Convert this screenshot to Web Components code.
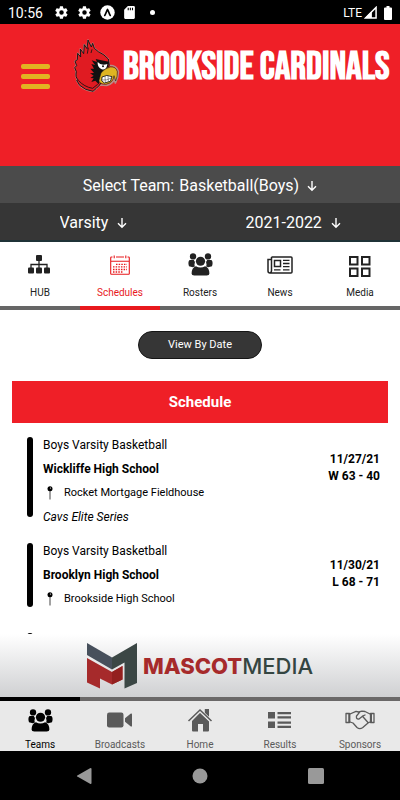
<!DOCTYPE html>
<html lang="en">
<head>
<meta charset="utf-8">
<meta name="viewport" content="width=device-width, initial-scale=1">
<title>Brookside Cardinals</title>
<style>
  html, body { height: 100%; }
  body { margin: 0; background: #fff; color: #000; font-family: Roboto, "Liberation Sans", sans-serif; }
</style>
</head>
<body>
<team-app></team-app>

<script>
const ICONS = {
  gear: ['0 0 24 24', '<path fill="currentColor" fill-rule="evenodd" d="M19.4 13a7.800 7.800 0 0 0 0-2l2.100-1.600a.5.5 0 0 0 .1-.6l-2-3.500a.5.5 0 0 0-.6-.2l-2.500 1a7.300 7.300 0 0 0-1.700-1l-.4-2.600a.5.5 0 0 0-.5-.4h-4a.5.5 0 0 0-.5.4L9 5.100a7.300 7.300 0 0 0-1.700 1l-2.500-1a.5.5 0 0 0-.6.200l-2 3.500a.5.5 0 0 0 .1.600L4.500 11a7.800 7.800 0 0 0 0 2l-2.200 1.600a.5.5 0 0 0-.1.600l2 3.500a.5.5 0 0 0 .6.200l2.500-1a7.300 7.300 0 0 0 1.700 1l.4 2.600a.5.5 0 0 0 .5.400h4a.5.5 0 0 0 .5-.4l.4-2.600a7.300 7.300 0 0 0 1.700-1l2.500 1a.5.5 0 0 0 .6-.2l2-3.500a.5.5 0 0 0-.1-.6zM12 15.600a3.600 3.600 0 1 1 0-7.200 3.600 3.600 0 0 1 0 7.200z"/>'],
  expo: ['0 0 16 16', '<circle cx="8" cy="8" r="7.700" fill="currentColor"/><path d="M5 11.200C6.300 9.500 7 6.300 8 4.600 9 6.300 9.700 9.500 11 11.200" fill="none" stroke="#000" stroke-width="1.700" stroke-linecap="round" stroke-linejoin="round"/>'],
  sd: ['0 0 12 14', '<path fill="currentColor" d="M4.500 1H10a1 1 0 0 1 1 1v10a1 1 0 0 1-1 1H2a1 1 0 0 1-1-1V4.500z"/><path d="M4.800 2.500v2.500M6.800 2.500v2.500M8.800 2.500v2.500" stroke="#000" stroke-width="1"/>'],
  signal: ['0 0 14 14', '<path d="M1.500 13H13V1.500z" fill="none" stroke="currentColor" stroke-width="1.600"/><path d="M1 13H8.500V5.500z" fill="currentColor"/>'],
  battery: ['0 0 8 14', '<path fill="currentColor" d="M2.500 0h3v1.500H7a1 1 0 0 1 1 1V13a1 1 0 0 1-1 1H1a1 1 0 0 1-1-1V2.500a1 1 0 0 1 1-1h1.500z"/>'],
  down: ['0 0 10 12', '<path d="M5 1v9M1 6.300 5 10.300 9 6.300" fill="none" stroke="currentColor" stroke-width="1.400"/>'],
  hub: ['0 0 24 20', '<g fill="currentColor"><rect x="8" y="0" width="6" height="6" rx="1"/><rect x="0" y="12.500" width="6" height="6" rx="1"/><rect x="8" y="12.500" width="6" height="6" rx="1"/><rect x="16" y="12.500" width="6" height="6" rx="1"/></g><path d="M11 5v8M3 13V9.500H19V13" fill="none" stroke="currentColor" stroke-width="1.300"/>'],
  calendar: ['0 0 20 20', '<path d="M2.500 2H1.500a.8.8 0 0 0-.8.8V18.500a.8.8 0 0 0 .8.800h17a.8.8 0 0 0 .8-.8V2.800a.8.8 0 0 0-.8-.8h-1M6 2h8M.7 6.300h18.600M4.200.4v2.800M15.800.4v2.800" fill="none" stroke="currentColor" stroke-width="1.100"/><path d="M6 9.300h11M3 11.900h14M3 14.500h14M3 17h10" stroke="currentColor" stroke-width="1.300" stroke-dasharray="1.500 1.150"/>'],
  group: ['0 0 26 24', '<g fill="currentColor"><circle cx="5.200" cy="3.600" r="3.300"/><circle cx="20.800" cy="3.600" r="3.300"/><path d="M1.600 7.300h4.400l1.200 2-.6 3.500.9 1-2.500 1L1 13.800Q-.5 9 1.600 7.300zM24.400 7.300h-4.400l-1.200 2 .6 3.500-.9 1 2.500 1 4-1q1.500-4.800-.6-6.500z"/><circle cx="13" cy="8.600" r="4.800"/><path d="M8.200 13.700q4.800 3 9.600 0 4.500 1.500 4.500 7.800 0 2-2.800 2H6.500q-2.800 0-2.800-2 0-6.300 4.500-7.800z"/></g>'],
  news: ['0 0 26 18', '<g fill="none" stroke="currentColor" stroke-width="1.500"><path d="M4.500 1H24a1 1 0 0 1 1 1V16a1 1 0 0 1-1 1H3a2 2 0 0 1-2-2V3.500h3.500V15a1.600 1.600 0 0 1-1.600 1.600M4.500 4V1"/><rect x="7.500" y="4.500" width="6" height="6"/><path d="M16 4.300h6.500M16 7.500h6.500M16 10.700h6.500M7 13.800h6.500M16 13.800h6.500" stroke-width="1.300"/></g>'],
  grid: ['0 0 22 24', '<g fill="none" stroke="currentColor" stroke-width="2"><rect x="1" y="4" width="7.500" height="7.500"/><rect x="13" y="4" width="7.500" height="7.500"/><rect x="1" y="15.500" width="7.500" height="7.500"/><rect x="13" y="15.500" width="7.500" height="7.500"/></g>'],
  pin: ['0 0 6 14', '<path d="M3 4v9.500" stroke="#444" stroke-width="1"/><circle cx="3" cy="2.700" r="2.500" fill="#000"/><circle cx="3.500" cy="2" r=".6" fill="#fff"/>'],
  camera: ['0 0 26 16', '<g fill="currentColor"><rect x="0" y=".5" width="16.500" height="15" rx="2.200"/><path d="M18 6.300 23.500 1.800q1.500-.9 1.500.5v11.400q0 1.400-1.500.5L18 9.700z"/></g>'],
  house: ['0 0 28 26', '<g fill="currentColor"><path d="M14 5.500 23 14v9.500q0 1-1 1h-5V17h-5v7.500H7q-1 0-1-1V14zM18.800 2h4.200v8.200l-4.200-4z"/></g><path d="M2 15 14 3.500 26 15" fill="none" stroke="#e9e9e9" stroke-width="3.200"/><path d="M2.500 14 14 3 25.500 14" fill="none" stroke="currentColor" stroke-width="1.500"/>'],
  list: ['0 0 24 18', '<path fill="currentColor" d="M0 1h7v6.500H0zM0 10.500h7V17H0zM9.500 1H23v2.300H9.500zM9.500 5.200H23v2.300H9.500zM9.500 10.500H23v2.300H9.500zM9.500 14.700H23V17H9.500z"/>'],
  shake: ['0 0 30 20', '<g fill="none" stroke="currentColor" stroke-width="1.300" stroke-linejoin="round" stroke-linecap="round"><path d="M1 3.500H4.500V12.500H1zM29 3.500H25.500V12.500H29z"/><path d="M5 4 11 1.300 13.500 2 17 1.200 20 1.500 25 4M5 12 8 13 12 17.500Q14.500 19.500 17.500 17.800L23 13 25 12M14.500 2.300 11.500 6Q11 9.500 14 9L17.500 6.200 23 12.500M17.500 6.200 20 5"/></g><path fill="currentColor" d="M3.300 3.500h2v9h-2zM25 3.500h2v9h-2z"/>'],
  back: ['0 0 16 18', '<path fill="currentColor" d="M14 1.300q1.500-.8 1.500.8v13.800q0 1.600-1.500.8L1.300 9.600q-1-.6 0-1.200z"/>'],
  circle: ['0 0 16 16', '<circle cx="8" cy="8" r="7.500" fill="currentColor"/>'],
  square: ['0 0 16 16', '<rect width="16" height="16" rx="1.500" fill="currentColor"/>'],
  cardinal: ['24 21 144 162', `
    <path d="M34 122 29 110 35 104 30 91 37 86 38 67 47 78 46 54 56 68 58 41 66 53 69 27 79 48 83 37 88 52 100 62Q118 70 130 84L133 103Q154 102 160 121 161 137 151 156L148 139Q147 158 125 163L104 162 94 172 84 181Q60 178 44 163L35 148 39 146Q30 138 34 122z" fill="#e01b22" stroke="#b98a86" stroke-width="5" stroke-linejoin="round"/>
    <path d="M34 122 29 110 35 104 30 91 37 86 38 67 47 78 46 54 56 68 58 41 66 53 69 27 79 48 83 37 88 52 100 62Q118 70 130 84L133 103 104 162 94 172 84 181Q60 178 44 163L35 148 39 146Q30 138 34 122z" fill="#e01b22" stroke="#111" stroke-width="2.800" stroke-linejoin="round"/>
    <path d="M70 50 67 68M81 55 78 66M40 148Q58 168 83 172L98 160" fill="none" stroke="#111" stroke-width="2.500"/>
    <path d="M80 88 96 93 92 84 109 88 132 92 130 106 121 121 110 128 106 143 101 160 91 149 79 153 86 142 76 141 86 134 75 127 87 126 76 113 87 113 79 99 90 102z" fill="#111"/>
    <path d="M98 93Q108 105 127 99 125 119 110 115 96 108 98 93z" fill="#fff"/>
    <circle cx="114" cy="106" r="3" fill="#111"/>
    <path d="M108 126Q119 112 136 108 153 106 157 122 158 136 152 150L147 134Q145 156 121 160 101 158 102 148z" fill="#dfb522" stroke="#111" stroke-width="1.500"/>
    <path d="M111 138Q125 129 141 137L136 151 118 156 110 149z" fill="#fff" stroke="#111" stroke-width="2.500"/>
    <path d="M111 147Q124 149 139 141M120 135l1 20M129 134l1 18" fill="none" stroke="#333" stroke-width="1.500"/>`],
  mascot: ['0 0 50 46', '<path d="M0 0 25 14.500V26.500L0 12z" fill="#47505c"/><path d="M25 14.500 50 0V40L37.500 45.500V19.500L25 26.500z" fill="#3b4745"/><path d="M0 15 25 29 35.500 23V36.500L25 41.500 13 35.500V45.500L0 39.500z" fill="#a62a2b"/><path d="M25 29 35.500 23V36.500L25 41.500z" fill="#93201f"/>']
};

/* Base class: gives each element an open shadow root with its own markup and styles. */
class ShadowElement extends HTMLElement {
  connectedCallback() {
    if (this.shadowRoot) return;
    const t = document.createElement('template');
    t.innerHTML = `<style>*{box-sizing:border-box}${this.constructor.css}</style>${this.render()}`;
    this.attachShadow({ mode: 'open' }).append(t.content.cloneNode(true));
  }
}

class AppIcon extends ShadowElement {
  static css = ':host{display:inline-flex;flex:none} svg{display:block}';
  render() {
    const [box, body] = ICONS[this.getAttribute('name')];
    return `<svg viewBox="${box}" width="${this.getAttribute('w')}" height="${this.getAttribute('h')}" aria-hidden="true">${body}</svg>`;
  }
}

class StatusBar extends ShadowElement {
  static css = `
    :host{display:flex;align-items:center;justify-content:space-between;height:24px;box-sizing:border-box;flex:none;padding:1px 8px 0;background:#000;color:#fff}
    div{display:flex;align-items:center;gap:8px}
    time{font-size:14px;margin-right:3px}
    .right{font-size:12px;gap:2px}
    app-icon[name=battery]{margin-left:5px}
    i{width:5px;height:5px;border-radius:50%;background:#fff;margin-left:6px}`;
  render() {
    return `<div><time>10:56</time><app-icon name="gear" w="15" h="15"></app-icon><app-icon name="gear" w="15" h="15"></app-icon>
      <app-icon name="expo" w="15" h="15"></app-icon><app-icon name="sd" w="13" h="15"></app-icon><i></i></div>
      <div class="right"><span>LTE</span><app-icon name="signal" w="13" h="13"></app-icon><app-icon name="battery" w="8" h="14"></app-icon></div>`;
  }
}

class TeamHeader extends ShadowElement {
  static css = `
    :host{display:flex;align-items:flex-start;flex:none;height:142px;box-sizing:border-box;padding:14px 0 0 21px;background:#ef1f27;color:#fff}
    button{display:flex;flex-direction:column;gap:5px;width:29px;margin:26px 23px 0 0;padding:0;border:0;background:none}
    button span{display:block;width:100%;height:5px;border-radius:2px;background:#e2b322}
    h1{margin:0 0 0 2px;font:700 39px/60px "Bebas Neue","Roboto Condensed","Liberation Sans Narrow",Roboto,sans-serif;white-space:nowrap}`;
  render() {
    return `<button type="button" aria-label="Menu"><span></span><span></span><span></span></button>
      <app-icon name="cardinal" w="48" h="54"></app-icon><h1>BROOKSIDE CARDINALS</h1>`;
  }
}

class FilterSelect extends ShadowElement {
  static css = `
    :host{display:flex;align-items:center}
    label{margin-right:5px}
    select{appearance:none;border:0;margin:0 8px 0 0;padding:0;background:none;color:inherit;font:inherit}`;
  render() {
    const label = this.getAttribute('label'), hidden = this.hasAttribute('bare');
    return `${hidden ? '' : `<label for="s">${label}</label>`}
      <select id="s" ${hidden ? `aria-label="${label}"` : ''}><option>${this.getAttribute('value')}</option></select>
      <app-icon name="down" w="10" h="12"></app-icon>`;
  }
}

class TeamFilters extends ShadowElement {
  static css = `
    :host{display:block;flex:none;color:#fff;font-size:16px;border-bottom:2px solid #1f3237}
    div{display:flex;justify-content:space-around;height:37px;padding-top:2px;background:#363636}
    .team{background:#4b4b4b}`;
  render() {
    return `<div class="team"><filter-select label="Select Team:" value="Basketball(Boys)"></filter-select></div>
      <div><filter-select bare label="Level" value="Varsity"></filter-select><filter-select bare label="Season" value="2021-2022"></filter-select></div>`;
  }
}

class TabLink extends ShadowElement {
  static css = `
    :host{display:flex;flex:1 1 0;min-width:0}
    a{display:flex;flex:1;flex-direction:column;align-items:center;color:inherit;text-decoration:none}
    .icon{display:flex;align-items:center;height:var(--icon-height)}`;
  render() {
    return `<a href="#"><span class="icon"><slot name="icon"></slot></span><slot></slot></a>`;
  }
}

class TopTabs extends ShadowElement {
  static css = `
    :host{display:flex;flex:none;height:68px;font-size:10px;line-height:12px;color:#222;--icon-height:45px}
    ::slotted(tab-link){border-bottom:4px solid #666}
    ::slotted(tab-link[current]){color:#e8191d;border-bottom-color:#e8191d}`;
  render() { return '<slot></slot>'; }
}

class BottomTabs extends ShadowElement {
  static css = `
    :host{display:flex;flex:none;height:54px;font-size:10px;line-height:12px;color:#5a5a5a;background:#e9e9e9;--icon-height:38px}
    ::slotted(tab-link){border-top:4px solid #6a6868}
    ::slotted(tab-link[current]){color:#000;border-top-color:#000}`;
  render() { return '<slot></slot>'; }
}

class GameCard extends ShadowElement {
  static css = `
    :host{display:flex;margin:0 20px 26px 27px;min-height:64px}
    .rule{flex:none;width:6px;margin-right:10px;border-radius:3px;background:#000}
    .info{flex:1;min-width:0;font-size:12px;line-height:16px;display:flex;flex-direction:column;gap:8px}
    .info ::slotted(*){display:block}
    .place{display:flex;align-items:center;font-size:11px;margin-left:4px;gap:11px}
    .info ::slotted([slot=name]){font-weight:700}
    .info ::slotted([slot=note]){font-style:italic;margin-bottom:-8px}
    .result{flex:none;align-self:flex-start;margin-top:14px;text-align:right;font-size:12px;line-height:17px;font-weight:700}
    .result ::slotted(*){display:block}`;
  render() {
    if (this.hasAttribute('loading')) return '<div class="rule"></div>';
    return `<div class="rule"></div>
      <div class="info"><slot></slot><slot name="name"></slot>
        <div class="place"><app-icon name="pin" w="6" h="14"></app-icon><slot name="place"></slot></div><slot name="note"></slot></div>
      <div class="result"><slot name="date"></slot><slot name="score"></slot></div>`;
  }
}

class ScheduleView extends ShadowElement {
  static css = `
    :host{display:block;flex:1 1 0;min-height:0;overflow:hidden;padding-top:21px}
    button{display:block;width:124px;height:28px;margin:0 auto 22px;border:1px solid #151515;border-radius:14px;background:#363636;color:#fff;font:11px/26px Roboto,sans-serif;padding:0}
    h2{margin:0 12px 14px;background:#ef1f27;color:#fff;text-align:center;font-size:15px;line-height:42px;font-weight:700}`;
  render() { return '<button type="button">View By Date</button><h2>Schedule</h2><slot></slot>'; }
}

class SponsorBanner extends ShadowElement {
  static css = `
    :host{display:flex;align-items:center;justify-content:center;gap:6px;flex:none;height:63px;background:linear-gradient(#fff,#cfd0d2);font:500 22px Inter,sans-serif;color:#344541}
    b{font-weight:800;color:#a62a2b}`;
  render() { return '<app-icon name="mascot" w="50" h="46"></app-icon><span><b>MASCOT</b>MEDIA</span>'; }
}

class SystemNav extends ShadowElement {
  static css = `
    :host{display:flex;align-items:center;justify-content:center;gap:100px;flex:none;height:49px;background:#000;color:#999}
    button{display:flex;padding:0;border:0;background:none;color:inherit}`;
  render() {
    return [['back', 'Back', 18], ['circle', 'Home', 16], ['square', 'Recent apps', 16]]
      .map(([n, l, h]) => `<button type="button" aria-label="${l}"><app-icon name="${n}" w="16" h="${h}"></app-icon></button>`).join('');
  }
}

const tab = (label, icon, w, h, current) =>
  `<tab-link ${current ? 'current' : ''}><app-icon slot="icon" name="${icon}" w="${w}" h="${h}"></app-icon>${label}</tab-link>`;

class TeamApp extends ShadowElement {
  static css = ':host{display:flex;flex-direction:column;height:100vh;overflow:hidden}';
  render() {
    return `<status-bar></status-bar><team-header></team-header><team-filters></team-filters>
      <top-tabs>${tab('HUB', 'hub', 24, 20)}${tab('Schedules', 'calendar', 20, 20, true)}${tab('Rosters', 'group', 25, 23)}${tab('News', 'news', 26, 18)}${tab('Media', 'grid', 22, 24)}</top-tabs>
      <schedule-view>
        <game-card>Boys Varsity Basketball<span slot="name">Wickliffe High School</span><span slot="place">Rocket Mortgage Fieldhouse</span>
          <span slot="note">Cavs Elite Series</span><span slot="date">11/27/21</span><span slot="score">W 63 - 40</span></game-card>
        <game-card>Boys Varsity Basketball<span slot="name">Brooklyn High School</span><span slot="place">Brookside High School</span>
          <span slot="date">11/30/21</span><span slot="score">L 68 - 71</span></game-card>
        <game-card loading></game-card>
      </schedule-view>
      <sponsor-banner></sponsor-banner>
      <bottom-tabs>${tab('Teams', 'group', 25, 23, true)}${tab('Broadcasts', 'camera', 26, 16)}${tab('Home', 'house', 28, 26)}${tab('Results', 'list', 24, 18)}${tab('Sponsors', 'shake', 30, 20)}</bottom-tabs>
      <system-nav></system-nav>`;
  }
}

Object.entries({
  'app-icon': AppIcon, 'status-bar': StatusBar, 'team-header': TeamHeader, 'filter-select': FilterSelect,
  'team-filters': TeamFilters, 'tab-link': TabLink, 'top-tabs': TopTabs, 'bottom-tabs': BottomTabs,
  'game-card': GameCard, 'schedule-view': ScheduleView, 'sponsor-banner': SponsorBanner,
  'system-nav': SystemNav, 'team-app': TeamApp
}).forEach(([name, cls]) => customElements.define(name, cls));
</script>
</body>
</html>
